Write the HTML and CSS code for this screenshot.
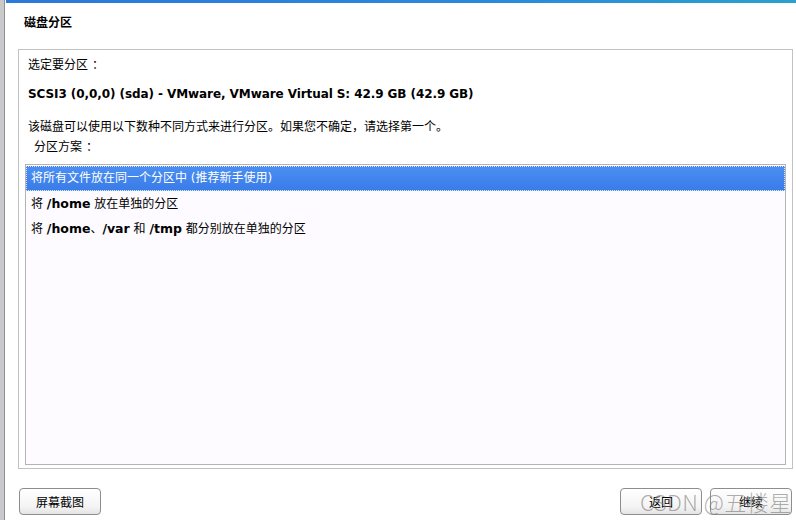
FILE: index.html
```html
<!DOCTYPE html>
<html>

<head>
    <title>磁盘分区</title>
    <link rel="stylesheet" href="styles.css">
</head>

<body>
    <div class="window">
        <div class="topbar"></div>
        <h2 class="title">磁盘分区</h2>

        <div class="frame">
            <p class="line cjk">选定要分区<span class="punc">：</span></p>
            <p class="line disk">SCSI3 (0,0,0) (sda) - VMware, VMware Virtual S: 42.9 GB (42.9 GB)</p>
            <p class="line note cjk">该磁盘可以使用以下数种不同方式来进行分区。如果您不确定，请选择第一个。</p>
            <p class="line scheme cjk">分区方案<span class="punc">：</span></p>

            <div class="list">
                <div class="row selected">将所有文件放在同一个分区中 (推荐新手使用)</div>
                <div class="row">将 <b>/home</b> 放在单独的分区</div>
                <div class="row">将 <b>/home</b>、<b>/var</b> 和 <b>/tmp</b> 都分别放在单独的分区</div>
            </div>
        </div>

        <div class="buttons">
            <button class="btn">屏幕截图</button>
            <div class="right">
                <button class="btn">返回</button>
                <button class="btn">继续</button>
            </div>
            <span class="watermark">CSDN @五楼星</span>
        </div>
    </div>
</body>

</html>
```

FILE: styles.css
```css
body {
    margin: 0;
    font-family: "DejaVu Sans", "Noto Sans CJK SC", sans-serif;
    font-size: 12px;
    color: #000;
    background: #fff;
}

.window {
    position: relative;
    width: 792px;
    height: 520px;
    border-left: 4px solid #c9c9cc;
    box-shadow: inset 1px 0 0 #8f8f94;
}

.topbar {
    height: 3px;
    margin-left: 2px;
    background: linear-gradient(to right, #2b79d9, #2a88dc 60%, #2aa2cc);
}

.title {
    margin: 0;
    padding: 13px 0 0 20px;
    height: 33px;
    font-size: 12px;
    font-weight: bold;
    line-height: 14px;
}

.frame {
    margin-left: 14px;
    width: 773px;
    height: 418px;
    border: 1px solid #c2c2c2;
    display: flex;
    flex-direction: column;
}

.line {
    margin: 0 0 0 9px;
    line-height: 16px;
}

.cjk {
    font-family: "Noto Sans CJK SC", "DejaVu Sans", sans-serif;
}

/* centre the full-width colon like the installer font does */
.punc {
    padding-left: 4px;
}

.line:first-child {
    margin-top: 6px;
}

.disk {
    margin-top: 14px;
    font-weight: bold;
    letter-spacing: -0.08px;
}

.note {
    margin-top: 16px;
}

.scheme {
    margin-top: 4px;
    margin-left: 15px;
}

.list {
    margin: 10px 6px 3px 6px;
    flex: 1;
    border: 1px solid #b4b4b4;
    background: #fdfbff;
    padding: 1px 0;
}

.row {
    height: 25px;
    line-height: 25px;
    padding-left: 5px;
}

.row b {
    font-weight: bold;
    font-size: 12.5px;
}

.row.selected {
    height: 23px;
    line-height: 23px;
    color: #fff;
    border: 1px dotted #dbe6fb;
    padding-left: 4px;
    background: linear-gradient(to bottom, #4a8ef3, #3a7ce8);
}

.buttons {
    display: flex;
    justify-content: space-between;
    padding: 19px 4px 0 15px;
}

.right {
    display: flex;
    gap: 8px;
}

.btn {
    width: 82px;
    height: 27px;
    font-family: "DejaVu Sans", "Noto Sans CJK SC", sans-serif;
    font-size: 12px;
    color: #000;
    border: 1px solid #8d8d8d;
    border-radius: 4px;
    background: linear-gradient(to bottom, #ffffff, #f4f4f4 70%, #e4e4e4);
    padding: 0;
}

.watermark {
    position: absolute;
    left: 636px;
    top: 485px;
    font-family: "Noto Sans CJK SC", sans-serif;
    font-weight: 300;
    font-size: 22px;
    color: rgba(120, 120, 120, 0.6);
    letter-spacing: 0.5px;
}
```
